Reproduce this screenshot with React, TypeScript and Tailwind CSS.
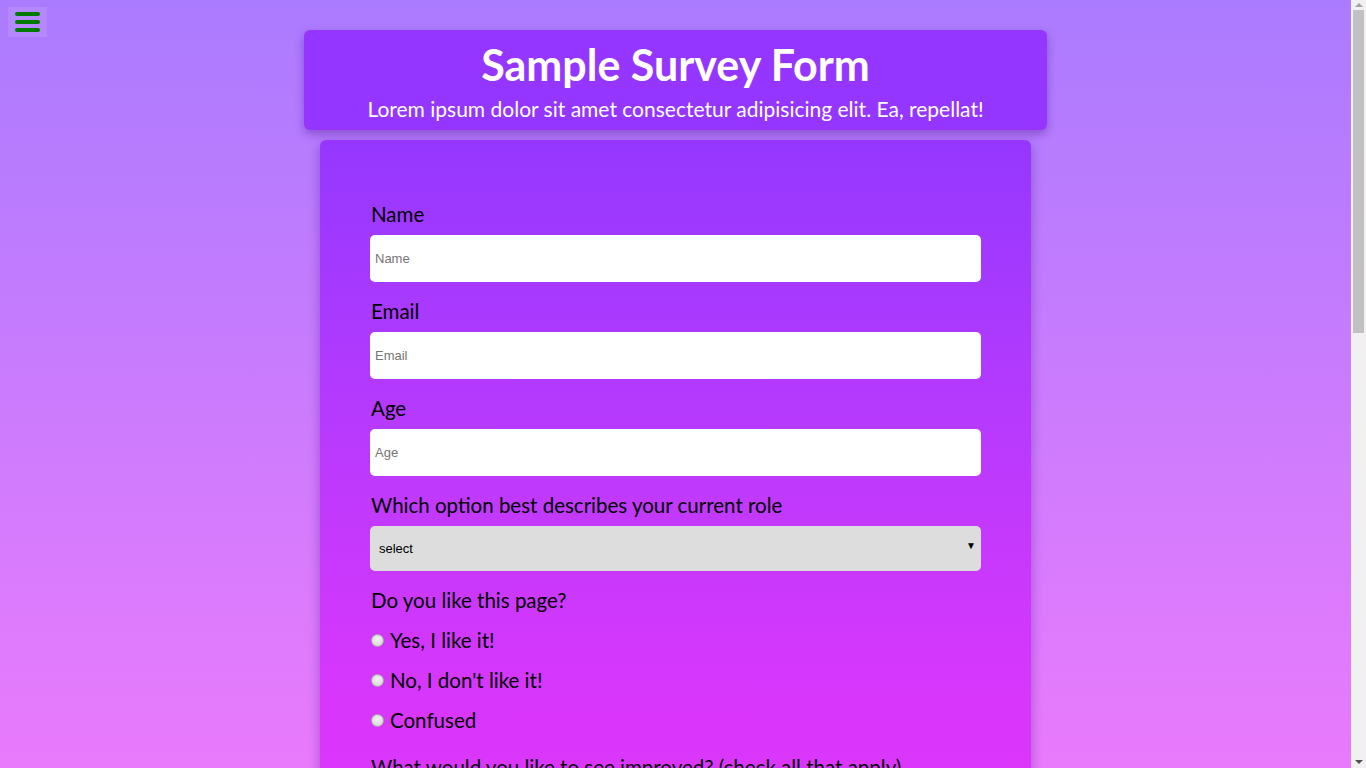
export default function App() {
  const improvements = [
    "Front-end Projects",
    "Back-end Projects",
    "Data Visualization",
    "Challenges",
    "Open Source Community",
    "Gitter help rooms",
    "Videos",
    "City Meetups",
    "Wiki",
    "Forum",
    "Additional Courses",
  ];

  const field =
    "mt-[9px] mb-[17px] block h-[47px] w-full rounded-[5px] bg-white pl-[5px] font-['Liberation_Sans',Arial,sans-serif] text-[13px] outline-none placeholder:text-[#757575]";
  const label = "block px-[1px] text-[20.5px] leading-6";
  const dot =
    "mr-[6px] ml-[1px] h-[13px] w-[13px] shrink-0 appearance-none rounded-full border border-[#a8a8a8] bg-[radial-gradient(circle_at_50%_40%,#f4f4f4,#cfcfcf)]";

  return (
    <div className="flex h-screen font-['Lato','Noto_Sans',sans-serif]">
      <div className="relative flex-1 overflow-y-auto bg-linear-to-b from-[#ab7bff] to-[#e97afc]">
        <div className="pt-[30px] pb-[30px]">
          {/* menu toggle */}
          <button className="fixed left-2 top-[7px] flex h-[30px] w-[39px] flex-col items-center justify-center gap-[4px] bg-white/10">
            <span className="block h-[4px] w-[25px] rounded-full bg-[#007a00]" />
            <span className="block h-[4px] w-[25px] rounded-full bg-[#007a00]" />
            <span className="block h-[4px] w-[25px] rounded-full bg-[#007a00]" />
          </button>

          <header className="mx-auto w-[743px] rounded-md bg-[#9436ff] pt-[10px] pb-[9px] text-center text-white shadow-[0_4px_10px_rgba(60,0,120,0.35)]">
            <h1 className="text-[43px] leading-[49px] font-bold">Sample Survey Form</h1>
            <p className="mt-2 text-[21px] leading-6">
              Lorem ipsum dolor sit amet consectetur adipisicing elit. Ea, repellat!
            </p>
          </header>

          <form className="mx-auto mt-[10px] w-[711px] rounded-md bg-linear-to-b from-[#9537ff] via-[#d936fb] via-40% to-[#f436f6] px-[50px] pt-[62px] pb-[50px] text-black shadow-[0_4px_12px_rgba(60,0,120,0.35)]">
            <label className={label}>Name</label>
            <input placeholder="Name" className={field} />

            <label className={label}>Email</label>
            <input placeholder="Email" className={field} />

            <label className={label}>Age</label>
            <input placeholder="Age" className={field} />

            <label className={label}>Which option best describes your current role</label>
            <div className="relative mt-[9px] mb-[17px]">
              <select className="block h-[45px] w-full appearance-none rounded-[5px] bg-[#dddddd] pl-[9px] font-['Liberation_Sans',Arial,sans-serif] text-[13px] text-black outline-none">
                <option>select</option>
                <option>Student</option>
                <option>Full Time Job</option>
                <option>Full Time Learner</option>
                <option>Prefer not to say</option>
                <option>Other</option>
              </select>
              <span className="pointer-events-none absolute right-[5px] top-[14px] text-[10px] leading-none text-black">▼</span>
            </div>

            <p className="px-[1px] text-[20.5px] leading-6">Do you like this page?</p>
            <div className="mt-4 flex flex-col gap-4">
              {["Yes, I like it!", "No, I don't like it!", "Confused"].map((t) => (
                <label key={t} className="flex items-center text-[20.5px] leading-6">
                  <input type="radio" name="like" className={dot} />
                  {t}
                </label>
              ))}
            </div>

            <p className="mt-[23px] px-[1px] text-[20.5px] leading-6">
              What would you like to see improved? (check all that apply)
            </p>
            <div className="mt-4 flex flex-col gap-4">
              {improvements.map((t) => (
                <label key={t} className="flex items-center text-[20.5px] leading-6">
                  <input type="checkbox" className="mr-[6px] ml-[1px] h-[13px] w-[13px]" />
                  {t}
                </label>
              ))}
            </div>

            <label className="mt-[23px] block px-[1px] text-[20.5px] leading-6">Any comments or suggestions?</label>
            <textarea
              placeholder="Enter your comment here..."
              className="mt-2 mb-[30px] block h-[150px] w-full resize-none rounded-[5px] bg-white p-[5px] font-['Liberation_Sans',Arial,sans-serif] text-[13px] outline-none placeholder:text-[#757575]"
            />

            <button
              type="submit"
              className="block h-[47px] w-full rounded-[5px] bg-[#7a1fd6] text-[20px] text-white"
            >
              Submit
            </button>
          </form>
        </div>
      </div>

      {/* scrollbar rail */}
      <div className="flex w-[15px] shrink-0 flex-col items-center bg-[#f1f1f1]">
        <span className="mt-[3px] h-0 w-0 border-x-[4px] border-b-[4px] border-x-transparent border-b-[#a3a3a3]" />
        <div className="mt-[3px] h-[323px] w-[11px] bg-[#c1c1c1]" />
        <div className="flex-1" />
        <span className="mb-[4px] h-0 w-0 border-x-[4px] border-t-[4px] border-x-transparent border-t-[#505050]" />
      </div>
    </div>
  );
}
